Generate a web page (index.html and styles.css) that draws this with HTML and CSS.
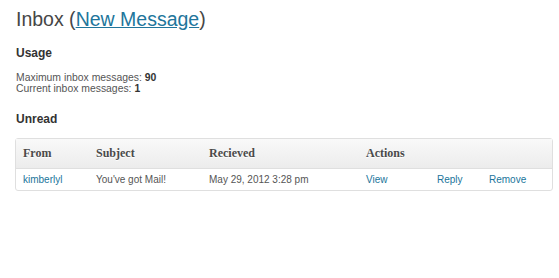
FILE: index.html
```html
<!DOCTYPE html>
<html>
<head>
<meta charset="utf-8">
<link rel="stylesheet" href="styles.css">
</head>
<body>
<div class="wrap">
  <h2 class="title">Inbox (<a href="#">New Message</a>)</h2>
  <h3 class="sub">Usage</h3>
  <p class="stats">Maximum inbox messages: <b>90</b><br>Current inbox messages: <b>1</b></p>
  <h3 class="sub">Unread</h3>
  <table class="msgs">
    <thead>
      <tr>
        <th class="c-from">From</th>
        <th class="c-subj">Subject</th>
        <th class="c-date">Recieved</th>
        <th class="c-act" colspan="3">Actions</th>
      </tr>
    </thead>
    <tbody>
      <tr>
        <td><a href="#">kimberlyl</a></td>
        <td>You've got Mail!</td>
        <td>May 29, 2012 3:28 pm</td>
        <td class="c-view"><a href="#">View</a></td>
        <td class="c-reply"><a href="#">Reply</a></td>
        <td><a href="#">Remove</a></td>
      </tr>
    </tbody>
  </table>
</div>
</body>
</html>
```
FILE: styles.css
```css
html, body { margin: 0; padding: 0; background: #fff; }
body { font-family: "Liberation Sans", Arial, sans-serif; color: #333; }
.wrap { padding: 6px 6px 0 15px; }
a { color: #21759b; }
.title {
  font-weight: normal;
  font-size: 19.5px;
  line-height: 26px;
  color: #464646;
  margin: 0 0 13px 1px;
}
.title a { text-decoration: underline; }
.sub {
  font-size: 12px;
  font-weight: bold;
  color: #333;
  margin: 0 0 11px 1px;
  line-height: 16px;
}
.stats {
  font-size: 10.4px;
  line-height: 11px;
  color: #555;
  margin: 0 0 17px 1px;
}
.stats b { color: #333; }
.msgs {
  width: 538px;
  border: 1px solid #dfdfdf;
  border-collapse: separate;
  border-spacing: 0;
  border-radius: 3px;
  font-size: 10px;
}
.msgs th {
  font-family: "Liberation Serif", Georgia, serif;
  font-weight: bold;
  font-size: 12px;
  text-align: left;
  color: #4a4a4a;
  text-shadow: 0 1px 0 #fff;
  background: linear-gradient(#f9f9f9, #ececec);
  height: 29px;
  padding: 0 7px;
  border-bottom: 1px solid #dfdfdf;
}
.msgs td {
  height: 21px;
  padding: 0 7px;
  color: #555;
}
.msgs a { text-decoration: none; }
.c-from { width: 59px; }
.c-subj { width: 99px; }
.c-date { width: 143px; }
.c-view { width: 57px; }
.c-reply { width: 38px; }
```
